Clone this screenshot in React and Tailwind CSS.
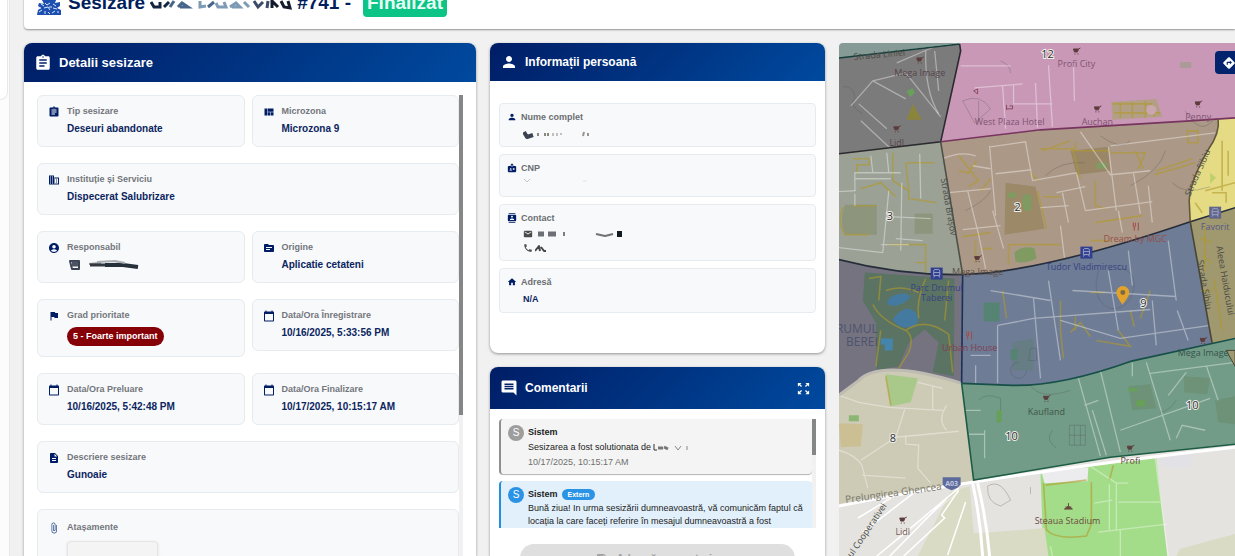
import {
  MdAccountCircle,
  MdAssignment,
  MdAttachFile,
  MdBadge,
  MdBusiness,
  MdCalendarToday,
  MdComment,
  MdContacts,
  MdDescription,
  MdDirections,
  MdEmail,
  MdFlag,
  MdHome,
  MdNote,
  MdPerson,
  MdPhone,
  MdSource,
  MdViewQuilt,
  MdZoomOutMap,
} from "react-icons/md";

const DETAILS = [
  { icon: MdAssignment, label: "Tip sesizare", value: "Deseuri abandonate" },
  { icon: MdViewQuilt, label: "Microzona", value: "Microzona 9" },
  { icon: MdBusiness, label: "Instituție și Serviciu", value: "Dispecerat Salubrizare", wide: true },
  { icon: MdAccountCircle, label: "Responsabil", hidden: true },
  { icon: MdSource, label: "Origine", value: "Aplicatie cetateni" },
  { icon: MdFlag, label: "Grad prioritate", priority: "5 - Foarte important" },
  { icon: MdCalendarToday, label: "Data/Ora Înregistrare", value: "10/16/2025, 5:33:56 PM" },
  { icon: MdCalendarToday, label: "Data/Ora Preluare", value: "10/16/2025, 5:42:48 PM" },
  { icon: MdCalendarToday, label: "Data/Ora Finalizare", value: "10/17/2025, 10:15:17 AM" },
  { icon: MdDescription, label: "Descriere sesizare", value: "Gunoaie", wide: true },
];

const ZONES = [
  { fill: "#869b96", d: "M838 42H959L838 57Z" },
  { fill: "#7c7b7b", d: "M838 57L959 43L960 50L940 141L838 153Z" },
  { fill: "#c998b7", d: "M959 42L960 50L940 141L1040 129L1190 120L1235 117V42Z" },
  { fill: "#9ba195", d: "M838 153L940 141L962 274Q900 275 838 259Z" },
  { fill: "#ab9887", d: "M940 141L1040 129L1218 118Q1220 132 1208 149Q1190 180 1189 200L1190 221Q1040 272 962 274Z" },
  { fill: "#e5db85", d: "M1218 118L1235 117V207L1190 221L1189 200Q1190 180 1208 149Q1220 132 1218 118Z" },
  { fill: "#a0986f", d: "M1190 221L1235 207V340L1212 343Z" },
  { fill: "#6e7c95", d: "M962 274Q1040 272 1190 221L1212 343L1130 361Q1060 386 1012 385L961 383Z" },
  { fill: "#74737f", d: "M838 259Q900 275 962 274L961 383Q880 358 858 380L838 395Z" },
  { fill: "#cdcab5", d: "M838 395L858 380Q880 358 961 383L973 480L838 504Z" },
  { fill: "#729c87", d: "M961 383L1012 385Q1060 386 1130 361L1235 338V444L1110 457L973 480Z" },
];

const BORDERS = [
  { stroke: "#123f3b", d: "M838 57L959 43" },
  { stroke: "#2b2b2f", d: "M959 43L960 50L940 141L838 153" },
  { stroke: "#77345f", d: "M940 141L1040 129L1190 120L1235 117" },
  { stroke: "#4c5148", d: "M940 141L962 274" },
  { stroke: "#262d3a", d: "M838 259Q900 275 962 274Q1040 272 1190 221L1235 207" },
  { stroke: "#62583c", d: "M1218 118Q1220 132 1208 149Q1190 180 1189 200L1190 221" },
  { stroke: "#494637", d: "M1190 221L1212 343" },
  { stroke: "#1b2f5c", d: "M962 274L961 383" },
  { stroke: "#174f49", d: "M961 383L1012 385Q1060 386 1130 361L1235 338" },
  { stroke: "#1c5c45", d: "M961 383L973 480L1110 457L1235 444" },
];

const PARKS = [
  { fill: "#5b7363", d: "M864 272L954 278L953 376L932 372L938 342L924 329L908 342L898 366L876 370L875 322L862 300Z" },
  { fill: "#9b8968", d: "M1005 182L1035 186L1044 228L1004 234Z" },
  { fill: "#8d957d", d: "M844 204H876V234H844Q838 220 844 204ZM914 213H932V233H914Z" },
  { fill: "#9a8768", d: "M1070 150L1108 146L1110 170L1076 174Z" },
  { fill: "#b39f86", d: "M1111 101L1156 98L1162 116L1112 119Z" },
  { fill: "#a9c98a", d: "M885 374L917 378L910 402L890 406Z" },
  { fill: "#cdbf94", d: "M838 423L862 424L860 446L840 447Z" },
  { fill: "#6d9278", d: "M1184 376L1210 378L1207 394L1184 392ZM1128 386L1150 384L1156 408L1132 410ZM1215 400L1235 396V424L1218 422Z" },
  { fill: "#568473", d: "M983 302H999V321H983Z" },
  { fill: "#667d84", d: "M1012 342L1033 338V370H1012Z" },
  { fill: "#568473", d: "M1010 349H1017V359H1010Z" },
  { fill: "#809b62", d: "M1014 252Q1022 244 1034 248L1036 258Q1024 264 1015 261ZM1022 196Q1026 190 1031 196V208Q1026 214 1022 206ZM1007 192H1016V197H1007ZM1096 162H1106V168H1096Z" },
  { fill: "#67a057", d: "M906 90L912 87L914 92L909 96ZM996 410H1001V422H996ZM1128 388H1137V391H1128ZM1136 400H1145V406H1136Z" },
  { fill: "#8bb772", d: "M848 415H858V421H848Z" },
  { fill: "#ab9b96", d: "M1180 61H1191V67H1180Z" },
  { fill: "#8b853c", d: "M912 103L921 119L906 119Z" },
  { fill: "#bed06c", d: "M1210 172L1216 177L1210 183Z" },
  { fill: "#a4dd8a", d: "M1090 466L1156 458L1167 556H1043L1040 474Z" },
  { fill: "#ececef", d: "M1041 471L1088 467L1087 481L1044 483Z" },
  { fill: "#e2e2e6", d: "M1160 457L1194 453L1192 466Q1174 471 1160 464Z" },
  { fill: "#dadbc4", d: "M957 534Q1010 531 1044 528L1048 556H957ZM950 492L969 486L975 556H917ZM1180 549Q1212 540 1235 534V556H1176Z" },
  { fill: "#447aa0", d: "M886 303Q888 295 897 294Q907 291 910 297Q899 307 890 305ZM895 315Q906 303 915 312Q920 320 914 325Q899 331 892 319Z" },
  { fill: "#4585ad", d: "M880 338H892V350H884V344H880Z" },
];

const ROADS = {
  light: [
    "M850 105L872 80L905 72M858 103L886 128M872 80L905 98M890 148L860 120M905 72L940 116M896 62L933 46",
    "M925 50Q924 90 938 113M934 50L938 90",
    "M974 87L1022 83M1002 85L1005 128M1013 84V103H1052M1035 82L1037 127M1048 64L1052 126M1073 60L1074 100M960 65H1010",
    "M854 190V172H900M870 155L872 172M886 152L888 172M854 178H890M838 191L855 190M854 193V205M888 190L882 252M901 182L900 250M888 216L930 218M895 238L922 240M838 247L882 252M908 244H880M919 153L920 198",
    "M942 158Q960 150 975 155M948 192L990 188M989 145L995 215M990 146L1025 141L1032 180M995 173L1031 169M992 210L1003 248M1032 180L1076 172L1085 210M1080 131L1110 174L1150 170M1110 145L1215 132M1108 146L1116 210M1133 171L1140 213M1062 192L1068 222M1056 192L1085 186M1040 207L1068 205M1085 210L1152 201M1148 185L1152 222M962 229L1000 225M978 234L985 268M1060 225L1064 257M1118 210L1122 232M972 165L990 168M967 190L978 234",
    "M997 325L1033 318L1150 309M1033 298L1040 378M1048 280L1060 360M997 325V383M1060 320L1120 338L1210 325M1072 290L1176 296M1152 300L1156 345M1108 270L1118 330M1128 250L1132 285M1168 240L1176 300M970 355H990M975 365V383M990 290L1050 300M1177 310L1188 340",
    "M838 395L858 402L888 407L942 410M917 382L942 388M932 385V409M904 409L895 437L860 460M895 437L958 431M905 435V444L918 445L917 468L930 483M838 450Q855 455 861 465L867 488M861 475L905 478M946 405Q936 420 946 430",
    "M1078 378L1100 456M1100 370L1120 452M1084 405L1098 400M1092 410L1106 455M1120 430L1210 398M1146 362L1170 440M1150 373L1235 362M1168 395L1186 372M1176 438L1182 425L1205 430M1206 365L1218 400M968 434H984V430M984 430V458M964 410H980M1132 362V376",
    "M857 518L890 498M862 532L914 492M876 556L958 492M889 556L946 498M903 556L944 518",
    "M1090 466L1116 483V530M1109 484V530M1116 483H1128M1094 503L1112 500M1098 532L1167 524M1120 530V556M1050 546L1052 556M1155 458L1168 556M1118 502H1160",
  ],
  yellow: [
    "M852 158H868V164H856V172M892 152V180L908 190V200M905 162L908 190M905 162H934M860 188L880 182L895 196M910 198L936 202M852 205H876M842 206Q836 222 844 234H868M888 244H925V262H915M925 262V272",
    "M958 155L978 180L968 186M958 170L968 172L976 160M980 190L990 178M1040 148H1075V142M1042 150L1070 140M1072 148L1080 178M1110 152H1145L1138 168M1070 150H1110M1037 190L1046 228M1042 196H1060M962 236L990 232M975 240V262M982 248H992M1008 244H1060M1008 244V264M1095 180V205L1105 208M1095 222L1142 215M1090 240H1110M1030 172L1038 180M1135 150L1143 168",
    "M1154 174L1195 162M1156 170L1192 158M1187 130H1198V142H1188Z",
    "M868 278L880 276L878 300M872 304Q880 320 905 330Q914 336 908 352L898 368M905 330Q925 316 948 334L952 372M948 280L944 320M925 278Q915 300 918 318M880 330L875 366M885 290Q900 284 918 292",
    "M1002 290L1006 318M1060 300V330L1063 358M1070 332L1080 322L1090 336M1096 340L1130 346L1118 330M1130 310L1134 326M1150 290L1140 318M1090 292H1105M1075 316V330",
    "M1205 225V270M1200 238L1212 242M1203 256L1212 262M1200 290H1212M1214 278L1222 330",
    "M1222 140V190M1205 190L1235 182M1195 202L1202 212M1228 150V175M1212 192H1226V202",
    "M885 376L890 405M1113 465L1109 480M1043 483L1046 530Q1056 540 1086 536L1091 524V482M1045 485L1086 480",
    "M1112 103H1152M1114 112H1160M1120 101V117M1132 101V117M1145 100V117M1154 104V116",
  ],
  dark: [
    "M842 86Q852 84 854 96Q848 106 862 113M962 100Q980 92 990 108L974 122ZM978 100V122M1000 60Q1010 64 1010 72",
    "M1045 175Q1060 160 1084 162M1130 185Q1160 170 1165 150M965 210Q985 200 990 190M1100 135Q1120 150 1130 140M1185 110Q1200 135 1212 120M1172 182Q1184 195 1210 186",
    "M1098 270Q1090 300 1110 308Q1130 310 1134 285Q1134 270 1120 268M1030 348H1036V360H1028ZM1018 362A8 8 0 1 0 1026 370",
    "M978 400Q985 392 1000 398L1000 410M1030 385Q1040 400 1070 390M1052 430Q1044 440 1056 448M1069 425H1085V445H1069ZM1074 425V445M1080 425V445M1069 435H1085M1176 400Q1170 410 1160 412",
    "M987 486Q1000 478 1010 500L1000 506Q986 502 987 486M1030 487V494",
  ],
};

const MAP_LABELS = [
  { x: 919, y: 75, text: "Mega Image", color: "#55434a" },
  { x: 896, y: 145, text: "Lidl", color: "#55434a" },
  { x: 1076, y: 66, text: "Profi City", color: "#7f5470" },
  { x: 1009, y: 124, text: "West Plaza Hotel", color: "#7f5470" },
  { x: 1097, y: 124, text: "Auchan", color: "#7f5470" },
  { x: 1198, y: 119, text: "Penny", color: "#7f5470" },
  { x: 977, y: 274, text: "Mega Image", color: "#5e5048" },
  { x: 1135, y: 241, text: "Dream by MGC", color: "#94504a" },
  { x: 1086, y: 269, text: "Tudor Vladimirescu", color: "#364382" },
  { x: 1215, y: 229, text: "Favorit", color: "#55598a" },
  { x: 936, y: 290, text: "Parc Drumul", color: "#364382" },
  { x: 936, y: 301, text: "Taberei", color: "#364382" },
  { x: 969, y: 351, text: "Urban House", color: "#803f52" },
  { x: 1203, y: 356, text: "Mega Image", color: "#34534d" },
  { x: 1046, y: 415, text: "Kaufland", color: "#3d5547" },
  { x: 1130, y: 464, text: "Profi", color: "#66453f" },
  { x: 902, y: 535, text: "Lidl", color: "#7a5a53" },
  { x: 1067, y: 524, text: "Steaua Stadium", color: "#6b4a40" },
];

const ZONE_NUMBERS = [
  { x: 1047, y: 57, n: 12 },
  { x: 889, y: 219, n: 3 },
  { x: 1017, y: 210, n: 2 },
  { x: 1143, y: 307, n: 9 },
  { x: 892, y: 442, n: 8 },
  { x: 1011, y: 440, n: 10 },
  { x: 1192, y: 409, n: 10 },
];

const CARTS = [
  [919, 59], [896, 128], [1076, 50], [1097, 108], [1198, 103],
  [977, 258], [1203, 340], [1046, 398], [1130, 448], [902, 520],
];

const METROS = [[936, 273], [1086, 252], [1215, 212]];

// Bars painted over personal data
function Redacted({ width, marks, className = "" }) {
  return (
    <svg width={width} height="12" viewBox={`0 0 ${width} 12`} className={`block ${className}`} aria-hidden="true">
      {marks.map(([d, w, color], i) => (
        <path key={i} d={d} stroke={color} strokeWidth={w} fill="none" strokeLinejoin="round" />
      ))}
    </svg>
  );
}

function PanelHeader({ icon: Icon, title, className, children }) {
  return (
    <div
      className={`flex items-center shrink-0 px-[10px] text-white bg-linear-135 from-[#001d66] to-[#004a9f] ${className}`}
    >
      <Icon className="w-[18px] h-[18px] mr-[7px]" />
      <h2 className="leading-4 font-bold">{title}</h2>
      {children}
    </div>
  );
}

function DetailCard({ item }) {
  const Icon = item.icon;
  return (
    <div
      className={`flex self-start gap-[7px] rounded-md border border-[#e6ebef] bg-[#f8f9fb] pl-[10px] pt-2 pb-[10px] ${
        item.wide ? "col-span-2" : ""
      }`}
    >
      <Icon className="w-3 h-3 mt-[2px] shrink-0 text-[#001d66]" />
      <div>
        <div className="text-[9px] leading-[14px] font-bold text-[#73767b]">{item.label}</div>
        {item.value && (
          <div className="mt-1 text-[10px] leading-[14px] font-bold text-[#0b2560]">{item.value}</div>
        )}
        {item.hidden && (
          <Redacted
            width={74}
            className="mt-1 mb-[2px]"
            marks={[
              ["M3 3H12V11H5Z", 2, "#3c4454"],
              ["M5 6H11", 5, "#4d5361"],
              ["M22 6L34 5", 2, "#8a8d92"],
              ["M23 7H44L52 6", 3, "#333840"],
              ["M38 7L56 7L71 9", 4, "#25303a"],
              ["M30 4L48 3L58 5", 2, "#a9adb2"],
            ]}
          />
        )}
        {item.priority && (
          <div className="mt-[5px] rounded-full bg-[#850007] px-[6px] text-[9px] leading-[19px] font-bold text-white">
            {item.priority}
          </div>
        )}
      </div>
    </div>
  );
}

function PersonRow({ icon: Icon, label, className, children }) {
  return (
    <div className={`rounded border border-[#e6ebef] bg-[#f8f9fb] pl-[7px] pt-[6px] ${className}`}>
      <div className="flex items-center gap-1">
        <Icon className="w-[10px] h-[10px] text-[#001d66]" />
        <span className="text-[9px] leading-[14px] font-bold text-[#6b6e72]">{label}</span>
      </div>
      <div className="pl-4">{children}</div>
    </div>
  );
}

function Comment({ tone, badge, children }) {
  const external = tone === "external";
  return (
    <li
      className={`flex gap-1 rounded border-l-2 pl-[7px] pt-[5px] pb-1 shadow-[0_1px_1px_rgba(0,0,0,0.3)] ${
        external ? "border-[#2190de] bg-[#e2f0fc]" : "border-[#8f8f8f] bg-[#f4f4f4]"
      }`}
    >
      <span
        className={`w-4 h-4 mt-px shrink-0 rounded-full text-center text-[10px] leading-4 text-white ${
          external ? "bg-[#2b93e6]" : "bg-[#9d9d9d]"
        }`}
      >
        S
      </span>
      <div className="min-w-0">
        <div className="flex items-center gap-1 text-[9px] leading-4 font-bold text-[#222]">
          Sistem
          {badge && (
            <span className="rounded-full bg-[#2b93e6] px-[6px] text-[7px] leading-[11px] text-white">{badge}</span>
          )}
        </div>
        {children}
      </div>
    </li>
  );
}

function ZoneMap() {
  return (
    <svg
      viewBox="838 42 397 514"
      preserveAspectRatio="xMidYMid slice"
      className="block w-full h-full font-['Open_Sans',sans-serif]"
      role="img"
      aria-label="Harta microzone"
    >
      <rect x="800" y="0" width="500" height="600" fill="#e4e3e0" />
      {ZONES.map((z) => (
        <path key={z.d} d={z.d} fill={z.fill} />
      ))}
      {PARKS.map((p) => (
        <path key={p.d} d={p.d} fill={p.fill} />
      ))}
      <g fill="none">
        {ROADS.dark.map((d) => (
          <path key={d} d={d} stroke="#4c5558" strokeOpacity="0.3" />
        ))}
        {ROADS.yellow.map((d) => (
          <path key={d} d={d} stroke="#b09a28" strokeOpacity="0.6" strokeWidth="1.6" />
        ))}
        {ROADS.light.map((d) => (
          <path key={d} d={d} stroke="#fff" strokeOpacity="0.38" strokeWidth="1.3" />
        ))}
        <path d="M838 506Q920 490 973 482Q1100 462 1235 447" stroke="#fff" strokeWidth="3" />
        <path d="M972 483Q980 520 982 556M977 483Q986 520 989 556" stroke="#fff" strokeWidth="3" />
        <path d="M857 518L890 498M862 532L914 492M876 556L958 488M889 556L946 498M903 556L944 518L941 515L958 490M947 555L965 502" stroke="#fff" strokeWidth="1.5" />
        <path d="M838 395L858 380Q880 358 961 383" stroke="#bebbb2" strokeWidth="3" />
        {BORDERS.map((b) => (
          <path key={b.d} d={b.d} stroke={b.stroke} strokeWidth="1.6" />
        ))}
      </g>
      <path d="M1226 350H1235V366Z" fill="#a0986f" stroke="#494637" />
      <circle cx="1151" cy="109" r="5" fill="#caa7ae" />
      <text x="877" y="333" fontSize="12" fill="#4e536e" textAnchor="end">RUMUL</text>
      <text x="877" y="346" fontSize="12" fill="#4e536e" textAnchor="end">BEREI</text>
      <g fontSize="9" fill="#4a4b45">
        <text transform="translate(853 59) rotate(-5)">Strada Liniei</text>
        <text transform="translate(940 178) rotate(80)">Strada Brașov</text>
        <text transform="translate(1190 196) rotate(-66)">Strada Sibiu</text>
        <text transform="translate(1197 260) rotate(80)">Strada Sibiu</text>
        <text transform="translate(1216 246) rotate(80)">Aleea Haiducului</text>
        <text transform="translate(845 503) rotate(-8)" fontSize="10" fill="#77766c">Prelungirea Ghencea</text>
        <text transform="translate(851 558) rotate(-56)">ul Cooperativei</text>
      </g>
      {CARTS.map(([x, y]) => (
        <g key={`${x}-${y}`} transform={`translate(${x} ${y})`} fill="#5c3c3c" stroke="#5c3c3c">
          <path d="M-3 -2H2L1 1H-2ZM2 -2L4 -3" strokeWidth="1" />
          <path d="M-2 3H-1M1 3H2" strokeWidth="1" />
        </g>
      ))}
      {METROS.map(([x, y]) => (
        <g key={`${x}-${y}`} transform={`translate(${x} ${y})`}>
          <rect x="-6" y="-6" width="12" height="12" fill={x > 1200 ? "#62658a" : "#303f8e"} />
          <path d="M-2 -4H2Q3 -4 3 -2V2H-3V-2Q-3 -4 -2 -4ZM-2 2L-3 4M2 2L3 4M-3 -1H3" fill="none" stroke="#9aa2c8" />
        </g>
      ))}
      <path d="M966 331V335Q967 337 968 335V331M967 335V339M971 331V339M1133 222V226Q1134 228 1135 226V222M1134 226V230M1138 222V230" fill="none" stroke="#a54848" />
      <path d="M1006 104V109M1006 108H1012V105H1009M973 90L977 88V93Z" fill="none" stroke="#8b4a60" />
      <path d="M1064 509L1068 506L1072 509ZM1065 507H1071M1068 503V507" fill="#6b4a40" stroke="#6b4a40" />
      {MAP_LABELS.map((l) => (
        <text key={`${l.x}-${l.y}`} x={l.x} y={l.y} fontSize="9" fill={l.color} textAnchor="middle">
          {l.text}
        </text>
      ))}
      <path d="M942 477H960V484Q958 488 951 490Q944 488 942 484Z" fill="#5d6b9c" />
      <text x="951" y="486" fontSize="7" fontWeight="700" fill="#c3cae2" textAnchor="middle">A03</text>
      {ZONE_NUMBERS.map((z) => (
        <text
          key={`${z.x}-${z.y}`}
          x={z.x}
          y={z.y}
          fontSize="11"
          fill="#2d2d2d"
          stroke="#f0efec"
          strokeWidth="2"
          paintOrder="stroke"
          textAnchor="middle"
        >
          {z.n}
        </text>
      ))}
      <path d="M1122 304Q1116 296 1116 292A6.500 6.500 0 0 1 1129 292Q1129 296 1122 304Z" fill="#e3a32a" />
      <circle cx="1122.500" cy="292" r="2.500" fill="#7a6a45" />
    </svg>
  );
}

export default function App() {
  return (
    <div className="flex h-screen overflow-hidden bg-[#f1f1f1] font-['Liberation_Sans',Arial,sans-serif]">
      <aside className="w-[10px] shrink-0 bg-[#fcfcfc] border-r border-[#e9e9e9]">
        <div className="w-2 h-[100px] rounded-br-xl border-r border-b border-[#e8e8e8] bg-white" />
      </aside>

      <main className="flex-1 min-w-0 flex flex-col pl-[14px]">
        <header className="-mt-6 h-[53px] shrink-0 flex items-center rounded-bl bg-white pl-3 shadow-[0_1px_2px_rgba(0,0,0,0.4)]">
          <svg width="26" height="26" viewBox="0 0 26 26" className="mr-[6px]" aria-hidden="true">
            <path d="M1 25L2 20L5 18L2 16L3 13L8 14L6 10H20L19 13L24 12L24 16L21 18L25 20V25Z" fill="#1c4fb0" />
            <path d="M2 18H5M5 14L8 16M9 13L11 15L14 13M13 17H16M17 14L20 16M8 18L12 17L14 20M3 22L6 20M9 21V24M17 18L21 19M16 23L19 21M12 22L14 24M21 22H23" stroke="#dbe7fa" fill="none" />
            <circle cx="9" cy="7" r="4" fill="#1c4fb0" />
            <circle cx="17" cy="7" r="4" fill="#1c4fb0" />
          </svg>
          <h1 className="flex items-center text-[19px] leading-6 font-bold text-[#001d5c]">
            Sesizare
            <svg width="142" height="20" viewBox="0 0 142 20" className="mx-[5px]" aria-hidden="true">
              <g fill="none" strokeWidth="3">
                <path d="M1 9L4 14H10V9M14 14L19 9" stroke="#15243f" />
                <path d="M20 14L24 8M28 14L32 10L38 14H30M58 14L64 9" stroke="#47658a" />
                <path d="M50 8V14L56 13M66 10L68 14H76L74 9M80 14L86 10L90 14H82M94 9L99 14" stroke="#7e9bb6" />
                <path d="M104 8L108 14L113 9M117 15L118 8" stroke="#3b4a66" />
                <path d="M122 15V8L128 14M131 8L134 14L140 15L138 8" stroke="#131b2d" />
              </g>
            </svg>
            #741 -
          </h1>
          <span className="ml-3 rounded bg-[#0bc486] px-1 text-[19px] leading-[29px] font-bold text-[#e9fff6]">
            Finalizat
          </span>
        </header>

        <div className="mt-[14px] flex-1 min-h-0 grid grid-cols-[452fr_335fr_396fr] gap-x-[14px]">
          <section className="min-h-0 flex flex-col overflow-hidden rounded-t-lg bg-white shadow-[0_1px_3px_rgba(0,0,0,0.4)]">
            <PanelHeader icon={MdAssignment} title="Detalii sesizare" className="h-[39px] text-[13px]" />
            <div className="flex-1 min-h-0 flex overflow-hidden mt-[13px] mx-[13px]">
              <div className="flex-1 self-start grid grid-cols-2 gap-x-[7px] gap-y-4">
                {DETAILS.map((item) => (
                  <DetailCard key={item.label} item={item} />
                ))}
                <div className="col-span-2 flex gap-[7px] rounded-md border border-[#e6ebef] bg-[#f8f9fb] pl-[10px] pt-[10px] pb-3">
                  <MdAttachFile className="w-3 h-3 mt-[2px] shrink-0 text-[#34558f]" />
                  <div>
                    <div className="text-[9px] leading-[14px] font-bold text-[#73767b]">Atașamente</div>
                    <div className="mt-[7px] w-[91px] h-16 rounded border border-[#e4e4e4] bg-[#f4f4f4] shadow-sm" />
                  </div>
                </div>
              </div>
              <div className="w-1 bg-[#f1f1f1]">
                <div className="h-80 bg-[#858686]" />
              </div>
            </div>
          </section>

          <div className="min-h-0 flex flex-col gap-[14px]">
            <section className="shrink-0 overflow-hidden rounded-lg bg-white pb-10 shadow-[0_1px_3px_rgba(0,0,0,0.4)]">
              <PanelHeader icon={MdPerson} title="Informații persoană" className="h-[38px] text-[12px]" />
              <div className="mt-[22px] mx-[9px] flex flex-col gap-[7px]">
                <PersonRow icon={MdPerson} label="Nume complet" className="h-11">
                  <Redacted
                    width={70}
                    className="mt-1"
                    marks={[
                      ["M1 4L4 9L10 7", 4, "#3c4350"],
                      ["M15 5V8M22 5V8M25 5V8", 2, "#8a8780"],
                      ["M30 5V8M34 5V8M38 5V7", 1, "#8a8780"],
                      ["M60 8L61 4M65 5V8", 2, "#989590"],
                    ]}
                  />
                </PersonRow>
                <PersonRow icon={MdBadge} label="CNP" className="h-[43px]">
                  <Redacted
                    width={70}
                    marks={[
                      ["M1 4L4 7L7 4", 1, "#c4c6c8"],
                      ["M60 6H64", 1, "#e2e2e0"],
                    ]}
                  />
                </PersonRow>
                <PersonRow icon={MdContacts} label="Contact" className="h-[57px]">
                  <div className="mt-[3px] flex items-center gap-1">
                    <MdEmail className="w-[10px] h-[10px] text-[#4b4b4b]" />
                    <Redacted
                      width={96}
                      marks={[
                        ["M1 6H7M11 6H19", 5, "#6c6f73"],
                        ["M27 4V8", 2, "#7a7d80"],
                        ["M59 6L68 8L76 6", 2, "#6f7376"],
                        ["M80 6H85", 6, "#111c24"],
                      ]}
                    />
                  </div>
                  <div className="mt-[2px] flex items-center gap-[2px]">
                    <MdPhone className="w-[10px] h-[10px] text-[#4b4b4b]" />
                    <Redacted width={20} marks={[["M0 9L4 4L5 9M6 5L9 9H11", 2, "#44484c"]]} />
                  </div>
                </PersonRow>
                <PersonRow icon={MdHome} label="Adresă" className="h-[45px]">
                  <div className="mt-[3px] text-[9px] leading-[14px] font-bold text-[#0b2560]">N/A</div>
                </PersonRow>
              </div>
            </section>

            <section className="flex-1 min-h-0 overflow-hidden rounded-t-lg bg-white shadow-[0_1px_3px_rgba(0,0,0,0.4)]">
              <PanelHeader icon={MdComment} title="Comentarii" className="h-[42px] text-[12px]">
                <button type="button" aria-label="Extinde" className="ml-auto mr-1">
                  <MdZoomOutMap className="w-[15px] h-[15px]" />
                </button>
              </PanelHeader>
              <div className="mt-[10px] mx-[9px] h-[109px] flex overflow-hidden">
                <ul className="flex-1 min-w-0 flex flex-col gap-[7px]">
                  <Comment tone="internal">
                    <p className="flex items-center text-[9px] leading-[14px] text-[#222]">
                      Sesizarea a fost solutionata de
                      <Redacted
                        width={40}
                        className="ml-[2px]"
                        marks={[
                          ["M1 3V9H4", 1, "#333"],
                          ["M5 7H10M11 6L15 8", 3, "#777"],
                          ["M22 5L25 9L28 5M34 5V9", 1, "#888"],
                        ]}
                      />
                    </p>
                    <time className="block text-[9px] leading-4 text-[#6f6f6f]">10/17/2025, 10:15:17 AM</time>
                  </Comment>
                  <Comment tone="external" badge="Extern">
                    <p className="text-[9px] leading-[13px] text-[#222]">
                      Bună ziua! In urma sesizării dumneavoastră, vă comunicăm faptul că locația la care faceți referire
                      în mesajul dumneavoastră a fost
                    </p>
                  </Comment>
                </ul>
                <div className="w-1 bg-[#f1f1f1]">
                  <div className="h-9 bg-[#858686]" />
                </div>
              </div>
              <button
                type="button"
                disabled
                className="mt-4 mx-auto w-[82%] h-7 flex items-center justify-center gap-2 rounded-full bg-[#dfdfdf] text-[11px] font-bold text-[#a3a3a3]"
              >
                <MdNote className="w-3 h-3" />
                Adaugă comentariu
              </button>
            </section>
          </div>

          <section className="relative min-h-0 overflow-hidden rounded-tl">
            <ZoneMap />
            <button
              type="button"
              aria-label="Indicații"
              className="absolute top-2 -right-2 w-7 h-[23px] flex items-center justify-center rounded bg-[#03246d] text-white"
            >
              <MdDirections className="w-[14px] h-[14px]" />
            </button>
          </section>
        </div>
      </main>
    </div>
  );
}
